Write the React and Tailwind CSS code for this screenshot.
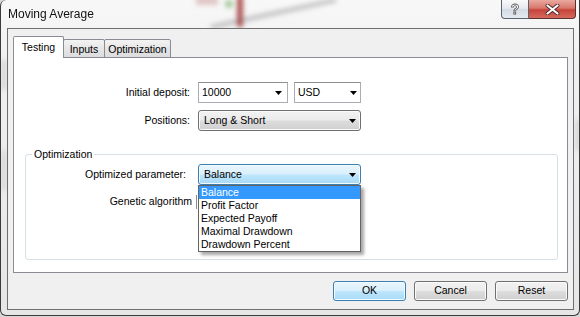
import React from 'react';

const btnGray = 'border border-[#707070] rounded-[3px] bg-[linear-gradient(#f2f2f2_0%,#ebebeb_48%,#dddddd_52%,#cfcfcf_100%)] shadow-[inset_0_0_0_1px_#fbfbfb]';
const btnBlue = 'border border-[#3c7fb1] rounded-[3px] bg-[linear-gradient(#eaf6fd_0%,#d9f0fc_48%,#bee6fd_52%,#a7d9f5_100%)] shadow-[inset_0_0_0_1px_#f4fbff]';

function Arrow() {
  return (
    <svg width="7" height="4" viewBox="0 0 7 4" className="shrink-0">
      <path d="M0 0h7L3.5 4z" fill="#000" />
    </svg>
  );
}

function EditCombo({ value, width, arrowPad = 'pr-[6px]' }) {
  return (
    <div className={`h-[21px] ${width} ${arrowPad} pl-[3px] flex items-center justify-between bg-white border border-[#abadb3] border-t-[#8e8f8f]`}>
      <span>{value}</span>
      <Arrow />
    </div>
  );
}

function ListCombo({ value, className }) {
  return (
    <div className={`h-[21px] w-[163px] pl-[5px] pr-[4px] flex items-center justify-between ${className}`}>
      <span>{value}</span>
      <Arrow />
    </div>
  );
}

const options = ['Balance', 'Profit Factor', 'Expected Payoff', 'Maximal Drawdown', 'Drawdown Percent'];

export default function App() {
  return (
    <div className="w-[580px] h-[317px] relative overflow-hidden bg-[#d8d8d8] font-['Liberation_Sans',Arial,sans-serif] text-[10.5px] text-black">
      <div className="relative w-[580px] h-[316px] border-x border-b border-[#3b3b3b] rounded-b-[6px] rounded-tl-[6px] bg-[linear-gradient(#f8f8f8,#f0f0f0_20%,#e6e6e6)] overflow-hidden">
        {/* blurred aero glass behind the frame */}
        <svg className="absolute inset-0 pointer-events-none" width="580" height="316">
          <defs>
            <filter id="blur" x="-50%" y="-50%" width="200%" height="200%"><feGaussianBlur stdDeviation="2.5" /></filter>
          </defs>
          <g filter="url(#blur)">
            <rect x="195" y="-4" width="22" height="9" fill="#c48a8a" opacity="0.45" />
            <circle cx="228" cy="4" r="4" fill="#7fb46e" opacity="0.7" />
            <path d="M210 27 L335 0" stroke="#8c8c8c" strokeWidth="4" opacity="0.55" />
            <rect x="236" y="-4" width="6" height="31" fill="#9e3434" opacity="0.85" />
            <rect x="1" y="60" width="4" height="30" fill="#bdbdbd" opacity="0.6" />
            <rect x="1" y="150" width="4" height="40" fill="#c4c4c4" opacity="0.6" />
            <rect x="575" y="120" width="4" height="30" fill="#bdbdbd" opacity="0.6" />
          </g>
        </svg>

        {/* caption */}
        <div className="relative h-[28px] flex items-center pl-[7px] text-[12px] text-[#111]">
          Moving Average
          <div className="absolute top-0 right-[3px] flex">
            <div className="w-[28px] h-[19px] border border-[#5a6370] border-t-0 rounded-bl-[4px] bg-[linear-gradient(#f8f9fa,#e3e8ee_50%,#d3dae3_50%,#e4eaf0)] flex items-center justify-center">
              <span className="text-[14px] leading-none font-bold text-white [-webkit-text-stroke:0.8px_#5a5a5a]">?</span>
            </div>
            <div className="w-[47px] h-[19px] border border-[#5a3030] border-t-0 border-l-0 rounded-br-[4px] bg-[linear-gradient(#e9a99f,#d9776c_45%,#c7433a_55%,#d66a5c)] flex items-center justify-center">
              <svg width="15" height="11" viewBox="0 0 15 11">
                <path d="M2.5 1.5L12.5 9.5M12.5 1.5L2.5 9.5" stroke="#4a2020" strokeWidth="3.8" strokeLinecap="round" />
                <path d="M2.5 1.5L12.5 9.5M12.5 1.5L2.5 9.5" stroke="#fff" strokeWidth="2.2" strokeLinecap="round" />
              </svg>
            </div>
          </div>
        </div>

        {/* client area */}
        <div className="relative ml-[6px] mr-[5px] h-[282px] border border-[#6f6f6f] bg-[#f0f0f0] px-[5px] pt-[7px] flex flex-col">
          {/* tabs */}
          <div className="relative z-10 -mb-px flex items-end h-[22px]">
            <div className="h-[22px] w-[51px] bg-white border border-b-0 border-[#898c95] rounded-t-[2px] flex justify-center pt-[3px] leading-[14px]">
              Testing
            </div>
            <div className="-ml-px h-[19px] w-[42px] border border-[#898c95] rounded-t-[2px] bg-[linear-gradient(#f3f3f3,#e6e6e6_50%,#dcdcdc)] flex justify-center pt-[2px] leading-[14px]">
              Inputs
            </div>
            <div className="-ml-px h-[19px] w-[67px] border border-[#898c95] rounded-t-[2px] bg-[linear-gradient(#f3f3f3,#e6e6e6_50%,#dcdcdc)] flex justify-center pt-[2px] leading-[14px]">
              Optimization
            </div>
          </div>

          {/* panel */}
          <div className="h-[216px] border border-[#898c95] bg-white pt-[24px]">
            <div className="flex items-center h-[21px]">
              <div className="w-[176px] text-right">Initial deposit:</div>
              <div className="ml-[8px] flex gap-[6px]">
                <EditCombo value="10000" width="w-[90px]" arrowPad="pr-[5px]" />
                <EditCombo value="USD" width="w-[67px]" arrowPad="pr-[3px]" />
              </div>
            </div>
            <div className="flex items-center h-[21px] mt-[7px]">
              <div className="w-[176px] text-right">Positions:</div>
              <div className="ml-[8px]">
                <ListCombo value="Long & Short" className={btnGray} />
              </div>
            </div>

            <fieldset className="ml-[11px] mt-[17px] w-[533px] h-[112px] border border-[#d5dfe5] rounded-[3px]">
              <legend className="ml-[6px] px-[2px] leading-[13px]">Optimization</legend>
              <div className="flex items-center h-[21px] mt-[3px]">
                <div className="w-[160px] text-right">Optimized parameter:</div>
                <div className="ml-[12px] relative z-20">
                  <ListCombo value="Balance" className={btnBlue} />
                  <div className="absolute left-0 top-full w-[163px] bg-white border border-[#646464] shadow-[3px_3px_3px_rgba(0,0,0,0.35)]">
                    {options.map((o, i) => (
                      <div
                        key={o}
                        className={`h-[13px] leading-[13px] pl-[2px] ${i === 0 ? 'bg-[#3399ff] text-white' : ''}`}
                      >
                        {o}
                      </div>
                    ))}
                  </div>
                </div>
              </div>
              <div className="flex items-center h-[18px] mt-[8px]">
                <div className="w-[166px] text-right">Genetic algorithm</div>
                <div className="ml-[4px] w-[1px] h-[14px] bg-[#8a8a8a]" />
              </div>
            </fieldset>
          </div>

          {/* buttons */}
          <div className="mt-[8px] flex justify-end gap-[8px]">
            <button className={`w-[73px] h-[20px] ${btnBlue}`}>OK</button>
            <button className={`w-[73px] h-[20px] ${btnGray}`}>Cancel</button>
            <button className={`w-[73px] h-[20px] ${btnGray}`}>Reset</button>
          </div>
        </div>
      </div>
    </div>
  );
}
